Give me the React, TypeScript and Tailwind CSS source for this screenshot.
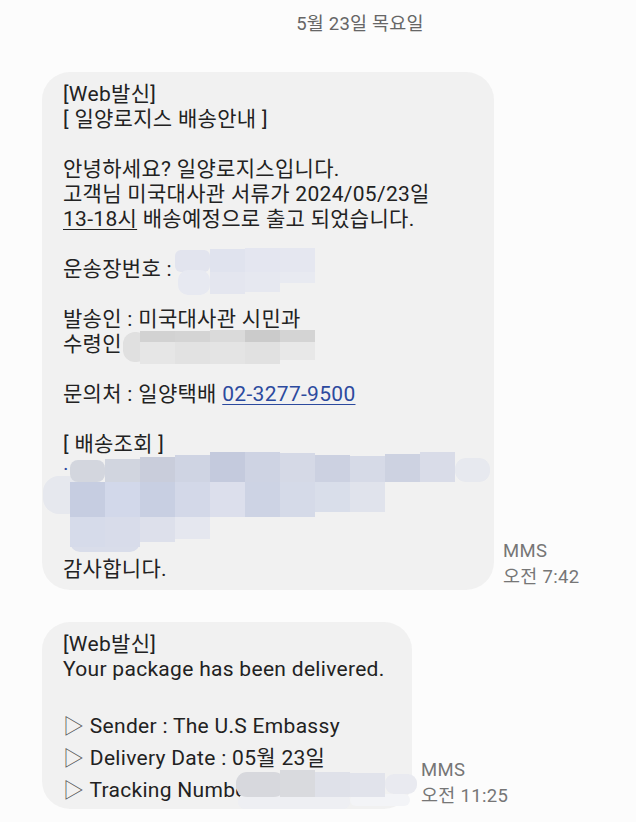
import React from 'react';

type Cell = [number, number, number, number, string, number?];

// mosaic cells in page coordinates: x, y, w, h, colour, radius
const firstBlur: Cell[] = [
  // 운송장번호
  [175, 250, 35, 22, '#e2e4ee', 6],
  [210, 249, 35, 23, '#e0e3ee'],
  [245, 248, 35, 24, '#e4e6f0'],
  [280, 248, 35, 24, '#e5e7f0'],
  [178, 270, 32, 25, '#e7e9f1', 10],
  [210, 272, 35, 22, '#e4e6ef'],
  [245, 272, 35, 20, '#e6e8f0'],
  [280, 272, 35, 11, '#e8eaf1'],
  // 수령인
  [123, 332, 25, 30, '#e0e0e0', 12],
  [140, 331, 35, 11, '#d2d2d2'],
  [175, 331, 35, 11, '#d4d4d4'],
  [210, 330, 35, 12, '#dadada'],
  [245, 330, 35, 12, '#cbcbcb'],
  [280, 330, 35, 12, '#d4d4d4'],
  [140, 342, 35, 22, '#e6e6e6'],
  [175, 342, 35, 22, '#e2e2e2'],
  [210, 342, 35, 22, '#e4e4e4'],
  [245, 342, 35, 22, '#e1e1e1'],
  [280, 342, 35, 18, '#e8e8e8'],
  // 배송조회 link
  [43, 476, 40, 38, '#e6e8ee', 16],
  [455, 458, 35, 24, '#e7e9ef', 11],
  [70, 460, 35, 22, '#d3d6de', 8],
  [105, 459, 35, 23, '#d1d5df'],
  [140, 457, 35, 25, '#c9cddb'],
  [175, 455, 35, 27, '#cfd4e3'],
  [210, 452, 35, 30, '#c4cadd'],
  [245, 452, 35, 30, '#ced3e3'],
  [280, 453, 35, 29, '#d5d9e6'],
  [315, 455, 35, 27, '#ccd1e1'],
  [350, 456, 35, 26, '#d6dae7'],
  [385, 454, 35, 28, '#cdd2e1'],
  [420, 452, 35, 30, '#d9dce8'],
  [70, 482, 35, 35, '#c6cde1'],
  [105, 482, 35, 35, '#d2d8ea'],
  [140, 482, 35, 35, '#c8cfe2'],
  [175, 482, 35, 35, '#d3d8e8'],
  [210, 482, 35, 35, '#dcdfec'],
  [245, 482, 35, 35, '#cdd3e4'],
  [280, 482, 35, 35, '#d5dae8'],
  [315, 482, 35, 30, '#d9deea'],
  [350, 482, 35, 30, '#e0e3ec'],
  [70, 530, 70, 22, '#d9ddea', 10],
  [70, 517, 35, 30, '#d6dbea'],
  [105, 517, 35, 30, '#d8dcea'],
  [140, 517, 35, 25, '#dde0eb'],
  [175, 517, 35, 22, '#e5e7ef'],
];

const secondBlur: Cell[] = [
  [238, 794, 112, 15, '#eeeff3', 7],
  [350, 794, 60, 12, '#f3f4f7', 6],
  [236, 772, 49, 25, '#d7d8dd', 11],
  [280, 770, 35, 27, '#d9dade'],
  [315, 772, 35, 25, '#dfe1e9'],
  [350, 773, 35, 24, '#e1e3eb'],
  [385, 774, 32, 20, '#e9eaf0', 9],
];

const Redaction: React.FC<{ cells: Cell[]; ox: number; oy: number }> = ({ cells, ox, oy }) => (
  <svg className="pointer-events-none absolute left-0 top-0 h-full w-full overflow-visible">
    <defs>
      <filter id={`soft-${oy}`} x="-10%" y="-10%" width="120%" height="120%">
        <feGaussianBlur stdDeviation="0.7" />
      </filter>
    </defs>
    <g transform={`translate(${-ox} ${-oy})`} filter={`url(#soft-${oy})`}>
      {cells.map(([x, y, w, h, c, r], i) => (
        <rect key={i} x={x} y={y} width={w} height={h} fill={c} rx={r ?? 0} />
      ))}
    </g>
  </svg>
);

const Stamp: React.FC<{ time: string }> = ({ time }) => (
  <div className="text-[18.5px] leading-[26px] tracking-[0.3px] text-[#767676]">
    <div>MMS</div>
    <div>{time}</div>
  </div>
);

const Blank: React.FC<{ h?: string }> = ({ h = 'h-[25px]' }) => <div className={h} />;

export default function App() {
  return (
    <div className="min-h-screen w-[636px] bg-[#fcfcfc] font-[Roboto,'Noto_Sans_CJK_KR',sans-serif] text-[#222]">
      <div className="pl-[84px] pt-3 text-center text-[18.5px] leading-[24px] tracking-[0.2px] text-[#666]">
        5월 23일 목요일
      </div>

      <div className="mt-[36px] flex items-end gap-[9px] pl-[42px]">
        <div className="relative w-[452px] rounded-[28px] bg-[#f1f1f1] pb-[8px] pl-[21px] pr-4 pt-[10px] text-[21px] leading-[25px] tracking-[0.3px]">
          <div>[Web발신]</div>
          <div>[ 일양로지스 배송안내 ]</div>
          <Blank />
          <div>안녕하세요? 일양로지스입니다.</div>
          <div>고객님 미국대사관 서류가 2024/05/23일</div>
          <div>
            <span className="underline decoration-1 underline-offset-[3px]">13-18시</span> 배송예정으로 출고 되었습니다.
          </div>
          <Blank />
          <div>운송장번호 :</div>
          <Blank />
          <div>발송인 : 미국대사관 시민과</div>
          <div>수령인</div>
          <Blank />
          <div>
            문의처 : 일양택배{' '}
            <span className="text-[#2c4a9e] underline decoration-1 underline-offset-[3px]">02-3277-9500</span>
          </div>
          <Blank />
          <div>[ 배송조회 ]</div>
          <div className="text-[#2c4a9e]">·</div>
          <Blank />
          <Blank />
          <Blank />
          <div>감사합니다.</div>
          <Redaction cells={firstBlur} ox={42} oy={72} />
        </div>
        <Stamp time="오전 7:42" />
      </div>

      <div className="mt-[32px] flex items-end gap-[9px] pl-[42px]">
        <div className="relative w-[370px] rounded-[28px] bg-[#f1f1f1] pb-[3px] pl-[21px] pr-4 pt-[10px] text-[21px] leading-[25px] tracking-[0.3px]">
          <div>[Web발신]</div>
          <div>Your package has been delivered.</div>
          <Blank h="h-[28px]" />
          <div className="leading-[32px]">
            <span className="text-[#555]">▷</span> Sender : The U.S Embassy
          </div>
          <div className="leading-[32px]">
            <span className="text-[#555]">▷</span> Delivery Date : 05월 23일
          </div>
          <div className="leading-[32px]">
            <span className="text-[#555]">▷</span> Tracking Number
          </div>
          <Redaction cells={secondBlur} ox={42} oy={622} />
        </div>
        <Stamp time="오전 11:25" />
      </div>
    </div>
  );
}
